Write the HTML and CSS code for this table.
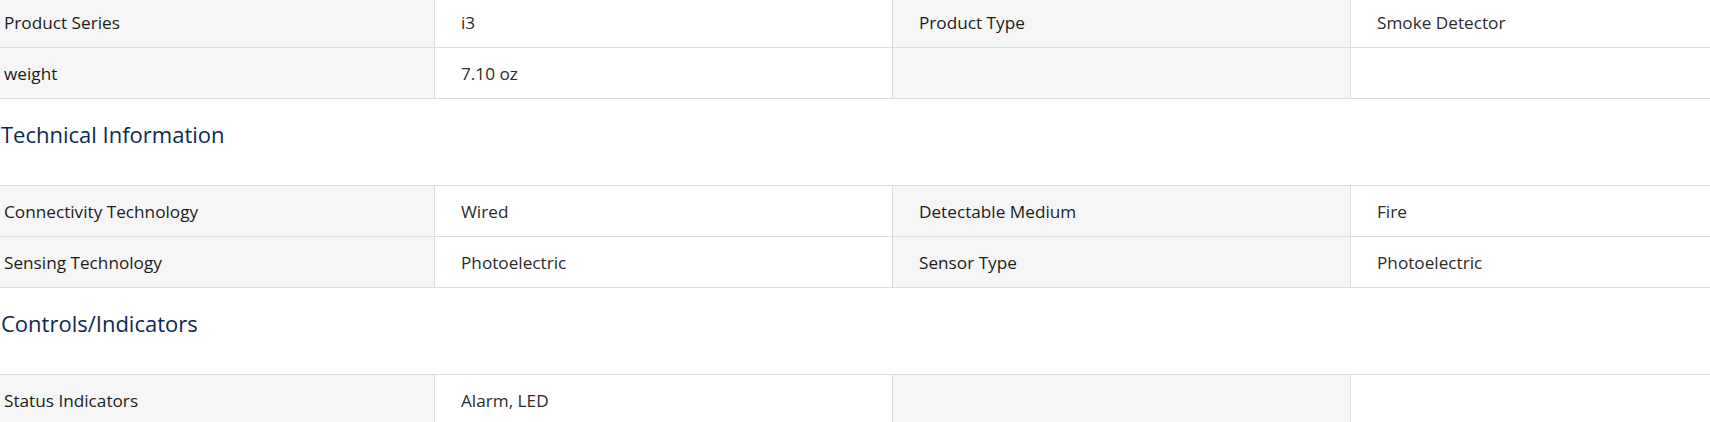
FILE: index.html
```html
<!DOCTYPE html>
<html lang="en">
<head>
<meta charset="utf-8">
<title>Specifications</title>
<link rel="stylesheet" href="styles.css">
</head>
<body>
<div class="specs">
  <div class="spec-table first">
    <div class="row">
      <div class="cell label">Product Series</div>
      <div class="cell value">i3</div>
      <div class="cell label">Product Type</div>
      <div class="cell value">Smoke Detector</div>
    </div>
    <div class="row">
      <div class="cell label">weight</div>
      <div class="cell value">7.10 oz</div>
      <div class="cell label"></div>
      <div class="cell value"></div>
    </div>
  </div>

  <h2 class="section-title">Technical Information</h2>
  <div class="spec-table">
    <div class="row">
      <div class="cell label">Connectivity Technology</div>
      <div class="cell value">Wired</div>
      <div class="cell label">Detectable Medium</div>
      <div class="cell value">Fire</div>
    </div>
    <div class="row">
      <div class="cell label">Sensing Technology</div>
      <div class="cell value">Photoelectric</div>
      <div class="cell label">Sensor Type</div>
      <div class="cell value">Photoelectric</div>
    </div>
  </div>

  <h2 class="section-title">Controls/Indicators</h2>
  <div class="spec-table">
    <div class="row">
      <div class="cell label">Status Indicators</div>
      <div class="cell value">Alarm, LED</div>
      <div class="cell label"></div>
      <div class="cell value"></div>
    </div>
  </div>
</div>
</body>
</html>
```

FILE: styles.css
```css
html, body {
  margin: 0;
  padding: 0;
  background: #ffffff;
  overflow: hidden;
}

body {
  font-family: "Open Sans", "Liberation Sans", sans-serif;
  color: #222222;
}

.specs {
  width: 1832px;
  margin-left: -22px;
  margin-top: -4px;
}

.spec-table {
  border-top: 1px solid #dddddd;
}

.row {
  display: grid;
  grid-template-columns: 456px repeat(3, 458px);
  border-bottom: 1px solid #dddddd;
}

.cell {
  height: 50px;
  display: flex;
  align-items: center;
  padding-left: 26px;
  font-size: 17.2px;
  box-sizing: border-box;
}

.cell + .cell {
  border-left: 1px solid #dddddd;
}

.label {
  background: #f6f6f6;
  color: #1c1c1c;
}

.value {
  background: #ffffff;
  color: #2b2b2b;
}

.section-title {
  margin: 0;
  padding: 20px 0 36px 23px;
  font-size: 22px;
  line-height: 30px;
  font-weight: 400;
  color: #0b2a52;
}
```
